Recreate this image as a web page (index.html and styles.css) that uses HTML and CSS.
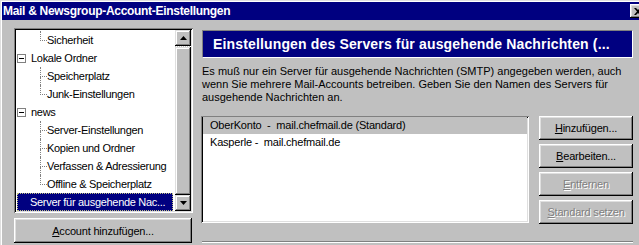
FILE: index.html
```html
<!DOCTYPE html>
<html lang="de">
<head>
  <meta charset="UTF-8">
  <title>Mail &amp; Newsgroup-Account-Einstellungen</title>
  <link rel="stylesheet" href="styles.css">
</head>
<body>
  <div class="window">
    <div class="titlebar">
      <h1>Mail &amp; Newsgroup-Account-Einstellungen</h1>
      <div class="close">
        <svg width="8" height="7" viewBox="0 0 8 7"><path d="M0 0h2l2 2 2-2h2L5 3.5 8 7H6L4 5 2 7H0l3-3.5z" fill="#000"/></svg>
      </div>
    </div>

    <div class="main">
      <div class="left">
        <div class="tree">
          <div class="tree-items">
            <div class="row child"><span class="branch last"><i></i><i></i></span>Sicherheit</div>
            <div class="row top"><span class="expander"></span>Lokale Ordner</div>
            <div class="row child"><span class="branch"><i></i><i></i></span>Speicherplatz</div>
            <div class="row child"><span class="branch last"><i></i><i></i></span>Junk-Einstellungen</div>
            <div class="row top"><span class="expander"></span>news</div>
            <div class="row child"><span class="branch"><i></i><i></i></span>Server-Einstellungen</div>
            <div class="row child"><span class="branch"><i></i><i></i></span>Kopien und Ordner</div>
            <div class="row child"><span class="branch"><i></i><i></i></span>Verfassen &amp; Adressierung</div>
            <div class="row child"><span class="branch last"><i></i><i></i></span>Offline &amp; Speicherplatz</div>
            <div class="row selected">Server für ausgehende Nac...</div>
          </div>
          <div class="scrollbar">
            <div class="sb-btn">
              <svg width="7" height="4" viewBox="0 0 7 4"><path d="M3.5 0L7 4H0z" fill="#000"/></svg>
            </div>
            <div class="sb-track"><div class="sb-thumb"></div></div>
            <div class="sb-btn">
              <svg width="7" height="4" viewBox="0 0 7 4"><path d="M0 0h7L3.5 4z" fill="#000"/></svg>
            </div>
          </div>
        </div>
        <button class="btn wide"><u>A</u>ccount hinzufügen...</button>
      </div>

      <div class="right">
        <div class="header">Einstellungen des Servers für ausgehende Nachrichten (...</div>
        <p class="desc">Es muß nur ein Server für ausgehende Nachrichten (SMTP) angegeben werden, auch<br>wenn Sie mehrere Mail-Accounts betreiben. Geben Sie den Namen des Servers für<br>ausgehende Nachrichten an.</p>
        <div class="servers">
          <div class="list">
            <div class="item current">OberKonto &nbsp;- &nbsp;mail.chefmail.de (Standard)</div>
            <div class="item">Kasperle - &nbsp;mail.chefmail.de</div>
          </div>
          <div class="buttons">
            <button class="btn"><u>H</u>inzufügen...</button>
            <button class="btn"><u>B</u>earbeiten...</button>
            <button class="btn disabled"><u>E</u>ntfernen</button>
            <button class="btn disabled"><u>S</u>tandard setzen</button>
          </div>
        </div>
        <div class="details"></div>
      </div>
    </div>
  </div>
</body>
</html>
```

FILE: styles.css
```css
body {
  margin: 0;
  width: 639px;
  height: 245px;
  overflow: hidden;
  background: #c0c0c0;
  font-family: "Liberation Sans", Arial, sans-serif;
  font-size: 11px;
  color: #000;
}
.window {
  height: 100%;
  box-sizing: border-box;
  padding: 2px 0 0 2px;
  box-shadow: inset 1px 1px #dfdfdf, inset 2px 2px #fff;
}
.titlebar {
  height: 18px;
  display: flex;
  align-items: center;
  padding-left: 1px;
  background: #000080;
  color: #fff;
}
.titlebar h1 {
  margin: 0;
  font-size: 12px;
  font-weight: bold;
  letter-spacing: -0.3px;
}
.close {
  margin-left: auto;
  margin-right: -7px;
  width: 16px;
  height: 14px;
  display: flex;
  align-items: center;
  justify-content: center;
  background: #c0c0c0;
  box-shadow: inset -1px -1px #000, inset 1px 1px #fff, inset -2px -2px #808080, inset 2px 2px #dfdfdf;
}

.main {
  display: flex;
  padding: 8px 0 0 12px;
}
.left {
  width: 179px;
  display: flex;
  flex-direction: column;
  gap: 5px;
}
.tree {
  height: 185px;
  box-sizing: border-box;
  padding: 2px;
  display: flex;
  background: #fff;
  box-shadow: inset 1px 1px #808080, inset -1px -1px #fff, inset 2px 2px #000, inset -2px -2px #dfdfdf;
}
.tree-items {
  flex: 1;
  padding-top: 1px;
  overflow: hidden;
  letter-spacing: -0.3px;
}
.row {
  height: 18px;
  display: flex;
  align-items: center;
  white-space: nowrap;
}
.row.top {
  padding-left: 1px;
}
.row.child {
  padding-left: 24px;
}
.expander {
  width: 9px;
  height: 9px;
  box-sizing: border-box;
  margin-right: 5px;
  border: 1px solid #808080;
  display: flex;
  align-items: center;
  justify-content: center;
}
.expander::after {
  content: "";
  width: 5px;
  height: 1px;
  background: #000;
}
.branch {
  align-self: stretch;
  width: 7px;
  display: flex;
  flex-direction: column;
}
.branch i {
  flex: 1;
  border-left: 1px dotted #808080;
}
.branch i:first-child {
  border-bottom: 1px dotted #808080;
}
.branch.last i:last-child {
  border-left: none;
}
.row.selected {
  margin: 0 2px 0 1px;
  padding-left: 13px;
  box-sizing: border-box;
  background: #000080;
  color: #fff;
  outline: 1px dotted #c0c080;
  outline-offset: -1px;
}

.scrollbar {
  width: 16px;
  display: flex;
  flex-direction: column;
}
.sb-btn {
  height: 16px;
  display: flex;
  align-items: center;
  justify-content: center;
  background: #c0c0c0;
  box-shadow: inset -1px -1px #000, inset 1px 1px #dfdfdf, inset -2px -2px #808080, inset 2px 2px #fff;
}
.sb-track {
  flex: 1;
  padding-top: 1px;
  background: repeating-conic-gradient(#fff 0 25%, #c0c0c0 0 50%) 0 0 / 2px 2px;
}
.sb-thumb {
  height: 148px;
  background: #c0c0c0;
  box-shadow: inset -1px -1px #000, inset 1px 1px #dfdfdf, inset -2px -2px #808080, inset 2px 2px #fff;
}

.btn {
  height: 24px;
  padding: 0;
  border: none;
  background: #c0c0c0;
  font: inherit;
  letter-spacing: -0.2px;
  color: #000;
  box-shadow: inset -1px -1px #000, inset 1px 1px #fff, inset -2px -2px #808080, inset 2px 2px #dfdfdf;
}
.btn.wide {
  width: 178px;
  height: 25px;
}
.btn.disabled {
  color: #808080;
  text-shadow: 1px 1px #fff;
}

.right {
  width: 432px;
  margin-left: 8px;
}
.header {
  height: 28px;
  margin: 2px 0 0 1px;
  box-sizing: border-box;
  padding-left: 10px;
  display: flex;
  align-items: center;
  background: #000080;
  border: 1px solid;
  border-color: #808080 #fff #fff #808080;
  color: #fff;
  font-size: 14px;
  font-weight: bold;
  letter-spacing: 0.15px;
  white-space: nowrap;
}
.desc {
  margin: 7px 0 0 1px;
  line-height: 13px;
  white-space: nowrap;
}
.servers {
  display: flex;
  margin-top: 12px;
}
.list {
  width: 328px;
  height: 107px;
  box-sizing: border-box;
  padding: 1px 2px 2px;
  background: #fff;
  box-shadow: inset 1px 1px #808080, inset -1px -1px #fff, inset 2px 2px #000, inset -2px -2px #dfdfdf;
}
.item {
  height: 17px;
  line-height: 17px;
  padding-left: 7px;
  letter-spacing: -0.2px;
  white-space: nowrap;
}
.item.current {
  background: #c0c0c0;
}
.buttons {
  width: 94px;
  margin-left: 10px;
  display: flex;
  flex-direction: column;
  gap: 4px;
}
.details {
  height: 10px;
  margin: 17px 0 0 1px;
  border-top: 1px solid #808080;
  box-shadow: inset 0 1px #fff;
}
```
